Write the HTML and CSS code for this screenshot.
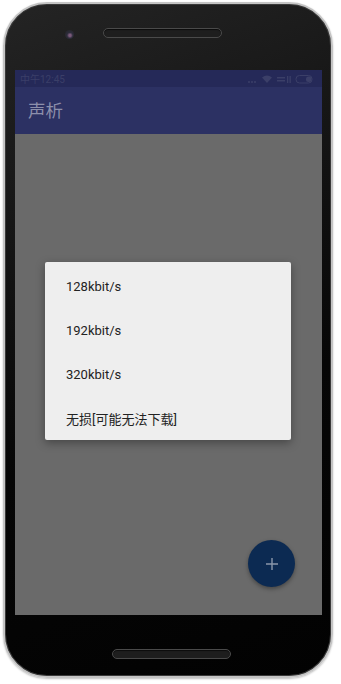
FILE: index.html
```html
<!DOCTYPE html>
<html lang="zh">
<head>
<meta charset="utf-8">
<link rel="stylesheet" href="styles.css">
</head>
<body>
<div class="phone">
  <div class="top">
    <div class="camera"></div>
    <div class="speaker"></div>
  </div>
  <div class="screen">
    <div class="status">
      <span class="time">中午12:45</span>
      <span class="icons">
        <svg width="72" height="10" viewBox="0 0 72 10">
          <circle cx="3" cy="8" r="1" fill="#3b3f68"/>
          <circle cx="6" cy="8" r="1" fill="#3b3f68"/>
          <circle cx="9" cy="8" r="1" fill="#3b3f68"/>
          <path d="M16 3.5 Q21 -0.5 26 3.5 L21 9 Z" fill="#3b3f68"/>
          <rect x="31" y="3" width="8" height="1.5" fill="#3b3f68"/>
          <rect x="31" y="6" width="8" height="1.5" fill="#3b3f68"/>
          <rect x="41" y="2" width="1.3" height="7" fill="#3b3f68"/>
          <rect x="43.5" y="2" width="1.3" height="7" fill="#3b3f68"/>
          <rect x="50" y="1.5" width="16" height="7.5" rx="3.5" fill="none" stroke="#3b3f68" stroke-width="1"/>
          <rect x="60" y="2.5" width="5.5" height="5.5" rx="2.5" fill="#3b3f68"/>
        </svg>
      </span>
    </div>
    <div class="appbar">声析</div>
    <div class="content"></div>
    <div class="fab">
      <svg width="14" height="14" viewBox="0 0 14 14"><path d="M7 1v12M1 7h12" stroke="#8a97ab" stroke-width="1.4"/></svg>
    </div>
    <div class="scrim">
      <ul class="dialog">
        <li>128kbit/s</li>
        <li>192kbit/s</li>
        <li>320kbit/s</li>
        <li>无损[可能无法下载]</li>
      </ul>
    </div>
  </div>
  <div class="bottom">
    <div class="speaker"></div>
  </div>
</div>
</body>
</html>
```

FILE: styles.css
```css
* { box-sizing: border-box; }
html, body { margin: 0; padding: 0; background: #ffffff; }
body { width: 341px; height: 684px; overflow: hidden; font-family: Roboto, "Noto Sans CJK SC", sans-serif; }

.phone {
  margin: 2px 0 0 3px;
  width: 330px;
  height: 676px;
  border-radius: 44px;
  border: 2px solid #c4c4c4;
  box-shadow: inset 0 0 0 1px #3a3a3a, 0 1px 2px rgba(0,0,0,0.25);
  background: linear-gradient(160deg, #242424 0%, #151515 30%, #060606 60%, #020202 100%);
  padding: 0 9px 0 10px;
  display: flex;
  flex-direction: column;
}

.top {
  height: 66px;
  display: flex;
  align-items: flex-start;
  padding-top: 24px;
}
.camera {
  width: 9px; height: 9px;
  border-radius: 50%;
  background: radial-gradient(circle at 55% 60%, #7a5a7a 0 15%, #2c2c3a 40%, #222 100%);
  margin: 2px 0 0 50px;
}
.speaker {
  width: 119px; height: 10px;
  border-radius: 5px;
  background: #1e1e1e;
  border: 1px solid #4a4a4a;
  box-shadow: inset 0 1px 1px rgba(0,0,0,0.6);
}
.top .speaker { margin-left: 29px; }

.screen {
  position: relative;
  height: 545px;
  width: 307px;
  display: flex;
  flex-direction: column;
  background: #6a6a6a;
}
.status {
  height: 17px;
  background: #252958;
  display: flex;
  align-items: center;
  justify-content: space-between;
  padding: 0 4px 0 5px;
}
.time { font-size: 10px; color: #3b3f68; }
.icons { display: flex; }
.appbar {
  height: 47px;
  background: #2c3163;
  color: #8c8fab;
  font-size: 17.5px;
  display: flex;
  align-items: center;
  padding-left: 13px;
  padding-bottom: 2px;
}
.content { flex: 1; background: #6a6a6a; }

.fab {
  position: absolute;
  right: 27px;
  bottom: 28px;
  width: 47px;
  height: 47px;
  border-radius: 50%;
  background: #0c2a52;
  box-shadow: 0 2px 4px rgba(0,0,0,0.35);
  display: flex;
  align-items: center;
  justify-content: center;
}

.scrim {
  position: absolute;
  left: 30px;
  top: 192px;
}
.dialog {
  list-style: none;
  margin: 0;
  padding: 2px 0 0 0;
  width: 246px;
  height: 178px;
  background: #eeeeee;
  box-shadow: 0 3px 10px rgba(0,0,0,0.35);
  border-radius: 2px;
}
.dialog li {
  height: 44px;
  display: flex;
  align-items: center;
  padding-left: 21px;
  font-size: 13px;
  color: #222222;
}

.bottom {
  flex: 1;
  display: flex;
  justify-content: center;
  padding-top: 34px;
}
.bottom .speaker { margin-left: 6px; }
```
